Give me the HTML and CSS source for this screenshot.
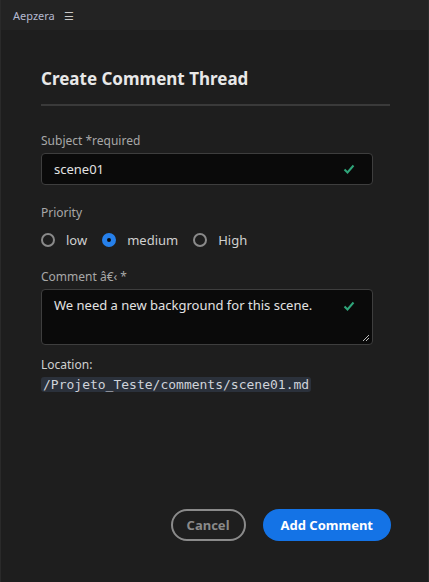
FILE: index.html
```html
<!DOCTYPE html>
<html lang="en">
<head>
<meta charset="utf-8">
<title>Create Comment Thread</title>
<link rel="stylesheet" href="styles.css">
</head>
<body>
<div class="app">
  <header class="topbar">
    <span class="brand">Aepzera</span>
    <span class="menu">&#9776;</span>
  </header>
  <main class="panel">
    <h1 class="title">Create Comment Thread</h1>
    <hr class="divider">
    <div class="field">
      <label class="label">Subject *required</label>
      <div class="input">
        <span class="value">scene01</span>
        <svg class="check" viewBox="0 0 12 12" width="12" height="12"><path d="M1.5 6.5 L4.5 9.5 L10.5 2.5" fill="none" stroke="#2fa57a" stroke-width="2"/></svg>
      </div>
    </div>
    <div class="field prio">
      <label class="label">Priority</label>
      <div class="radios">
        <span class="radio"><span class="dot"></span>low</span>
        <span class="radio on"><span class="dot"></span>medium</span>
        <span class="radio"><span class="dot"></span>High</span>
      </div>
    </div>
    <div class="field last">
      <label class="label">Comment â€‹ *</label>
      <div class="input area">
        <span class="value">We need a new background for this scene.</span>
        <svg class="check" viewBox="0 0 12 12" width="12" height="12"><path d="M1.5 6.5 L4.5 9.5 L10.5 2.5" fill="none" stroke="#2fa57a" stroke-width="2"/></svg>
        <svg class="grip" viewBox="0 0 8 8" width="8" height="8"><path d="M1 7 L7 1 M4 7 L7 4" stroke="#bbb" stroke-width="1"/></svg>
      </div>
    </div>
    <div class="location">
      <span class="label loc">Location:</span>
      <code class="path">/Projeto_Teste/comments/scene01.md</code>
    </div>
    <div class="actions">
      <button class="btn cancel">Cancel</button>
      <button class="btn primary">Add Comment</button>
    </div>
  </main>
</div>
</body>
</html>
```
FILE: styles.css
```css
* { box-sizing: border-box; }
html, body { margin: 0; padding: 0; }
body {
  background: #1e1e1e;
  font-family: "Noto Sans", "Open Sans", sans-serif;
  color: #ddd;
  width: 429px;
  height: 582px;
  overflow: hidden;
}
.app {
  height: 582px;
  border-left: 1px solid #2a2a2a;
  border-right: 1px solid #2a2a2a;
  display: flex;
  flex-direction: column;
}
.topbar {
  height: 30px;
  background: #232323;
  display: flex;
  align-items: center;
  padding-left: 12px;
  gap: 9px;
  font-size: 11px;
  color: #b4b8d0;
}
.menu { font-size: 11px; color: #c8c8c8; }
.panel {
  padding: 37px 38px 0 40px;
  display: flex;
  flex-direction: column;
  flex: 1;
}
.title {
  margin: 0;
  font-size: 17px;
  font-weight: 700;
  color: #e8e8e8;
  line-height: 24px;
}
.divider {
  border: 0;
  height: 2px;
  background: #3a3a3a;
  margin: 13px 0 27px;
}
.field { display: flex; flex-direction: column; margin-bottom: 20px; width: 332px; }
.field.prio { margin-bottom: 16px; }
.field.last { margin-bottom: 12px; }
.label { font-size: 12px; color: #a8a8a8; line-height: 16px; margin-bottom: 4px; }
.input {
  height: 32px;
  border: 1px solid #3e3e3e;
  border-radius: 4px;
  background: #0a0a0a;
  display: flex;
  align-items: center;
  padding: 0 17px 0 12px;
  position: relative;
}
.value { flex: 1; font-size: 13px; color: #e2e2e2; }
.check { flex: none; }
.input.area { height: 56px; align-items: flex-start; padding-top: 6px; }
.input.area .check { margin-top: 4px; }
.grip { position: absolute; right: 2px; bottom: 2px; }
.radios { display: flex; gap: 15px; align-items: center; height: 28px; padding-top: 2px; }
.radio { display: flex; align-items: center; gap: 11px; font-size: 13px; color: #d0d0d0; }
.dot {
  width: 14px; height: 14px; border-radius: 50%;
  border: 2px solid #8a8a8a;
  display: inline-block;
}
.radio.on .dot { border: 5px solid #2680eb; background: #0a0a0a; }
.location { display: flex; flex-direction: column; align-items: flex-start; gap: 4px; }
.loc { color: #d0d0d0; margin: 0; }
.path {
  font-family: "DejaVu Sans Mono", monospace;
  font-size: 13px;
  background: #2b313b;
  color: #cfd3da;
  padding: 0 2px;
  border-radius: 3px;
}
.actions {
  margin-top: auto;
  margin-bottom: 41px;
  display: flex;
  justify-content: flex-end;
  gap: 17px;
  width: 350px;
}
.btn {
  height: 32px;
  border-radius: 16px;
  font-family: "Noto Sans", sans-serif;
  font-weight: 700;
  font-size: 13px;
}
.cancel { background: transparent; border: 2px solid #8a8a8a; color: #8a8a8a; padding: 0 14px; }
.primary { background: #1473e6; border: 0; color: #fff; padding: 0 18px; }
```
